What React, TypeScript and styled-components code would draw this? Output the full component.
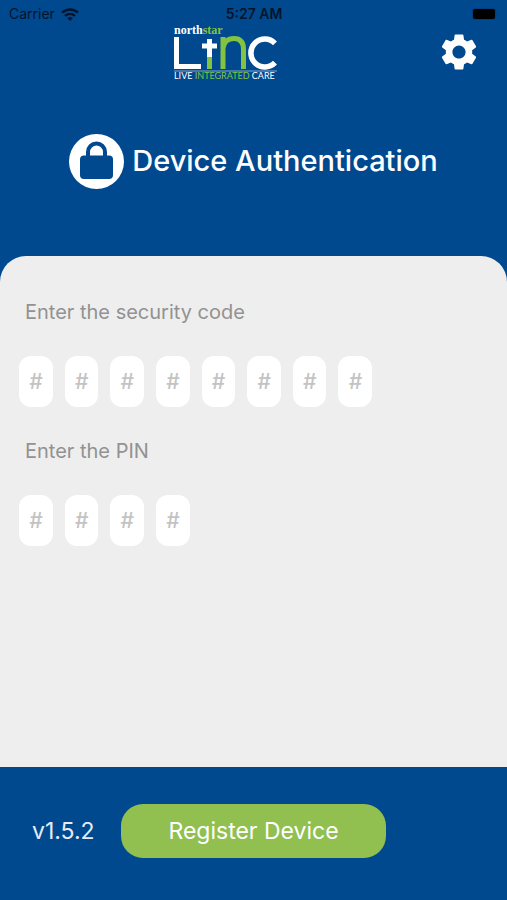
import React, { useState } from "react";
import styled, { createGlobalStyle } from "styled-components";
import { MdSettings } from "react-icons/md";

const colors = {
  blue: "#00498f",
  green: "#91c050",
  logoGreen: "#82c341",
  panel: "#eeeeee",
  ink: "#03152b",
};

const GlobalStyle = createGlobalStyle`
  *, *::before, *::after { box-sizing: border-box; }
  html, body { margin: 0; background: ${colors.blue}; }
  body { font-family: Inter, "Liberation Sans", sans-serif; }
`;

const Screen = styled.main`
  display: flex;
  flex-direction: column;
  min-height: 100vh;
  background: ${colors.blue};
`;

const StatusBar = styled.div`
  display: grid;
  grid-template-columns: 1fr auto 1fr;
  align-items: center;
  height: 24px;
  padding: 4px 8px 0 9px;
  font-size: 14px;
  line-height: 20px;
  color: ${colors.ink};
`;

const Carrier = styled.span`
  display: flex;
  align-items: center;
  gap: 6px;
`;

const Clock = styled.time`
  font-weight: 600;
`;

const BatteryIcon = styled.svg`
  justify-self: end;
`;

const Header = styled.header`
  display: grid;
  grid-template-columns: 1fr auto 1fr;
  align-items: center;
  height: 56px;
  padding: 0 26px;
`;

const Logo = styled.svg`
  grid-column: 2;
  margin-right: 56px;
`;

const SettingsButton = styled.button`
  display: flex;
  justify-self: end;
  padding: 0;
  border: 0;
  background: none;
  color: #ffffff;
  cursor: pointer;
`;

const TitleRow = styled.div`
  display: flex;
  align-items: center;
  justify-content: center;
  gap: 8px;
  height: 176px;
  padding-bottom: 14px;
`;

const Title = styled.h1`
  margin: 0;
  font-size: 29px;
  line-height: 36px;
  font-weight: 500;
  color: #ffffff;
`;

const Panel = styled.form`
  display: flex;
  flex: 1;
  flex-direction: column;
  gap: 32px;
  padding: 44px 19px;
  border-radius: 26px 26px 0 0;
  background: ${colors.panel};
`;

const CodeGroup = styled.div`
  display: flex;
  flex-direction: column;
  gap: 32px;
`;

const CodeLabel = styled.label`
  padding-left: 6px;
  font-size: 20px;
  line-height: 24px;
  color: #929292;
`;

const Digits = styled.div`
  display: grid;
  grid-template-columns: repeat(8, 1fr);
  gap: 12px;
  max-width: 353px;
`;

const Digit = styled.input`
  width: 100%;
  height: 51px;
  padding: 0;
  border: 0;
  border-radius: 12px;
  background: #ffffff;
  font: inherit;
  font-size: 21px;
  text-align: center;
  color: #555555;

  &::placeholder {
    font-style: italic;
    font-weight: 500;
    color: #c3c3c3;
    opacity: 1;
  }
`;

const Footer = styled.footer`
  display: flex;
  align-items: center;
  gap: 26px;
  height: 133px;
  padding: 0 32px 6px;
`;

const Version = styled.span`
  font-size: 23px;
  line-height: 28px;
  color: #e4edf7;
`;

const RegisterButton = styled.button`
  width: 60%;
  height: 54px;
  padding: 0;
  border: 0;
  border-radius: 22px;
  background: ${colors.green};
  font: inherit;
  font-size: 23px;
  line-height: 28px;
  color: #ffffff;
  cursor: pointer;
`;

function LincLogo() {
  return (
    <Logo width="104" height="56" viewBox="0 -2 104 56" role="img" aria-label="northstar LINC">
      <text x="0" y="8" fontFamily="'Liberation Serif', serif" fontSize="12" fontWeight="700" fill="#ffffff">
        north<tspan fill={colors.logoGreen}>star</tspan>
      </text>
      <path d="M2.5 11V40.500H27" fill="none" stroke="#ffffff" strokeWidth="5" />
      <path d="M33 31 38 26V43H33Z" fill={colors.logoGreen} />
      <path d="M35.500 13V31M28 20H43" fill="none" stroke="#ffffff" strokeWidth="5" />
      <path
        d="M49 43V11M49 22C50 16 54 12.500 60 12.500C66.500 12.500 69.500 16.500 69.500 23.500V43"
        fill="none"
        stroke={colors.logoGreen}
        strokeWidth="5"
      />
      <path d="M101 17.300A14 14 0 1 0 101 36.700" fill="none" stroke="#ffffff" strokeWidth="5.500" />
      <path d="M0 45H103" stroke="#7da7cc" strokeWidth="1" />
      <text x="0" y="53" fontFamily="Lato, sans-serif" fontSize="9" fill="#ffffff">
        LIVE <tspan fill={colors.logoGreen}>INTEGRATED</tspan> CARE
      </text>
    </Logo>
  );
}

function LockBadge() {
  return (
    <svg width="55" height="55" viewBox="0 0 55 55" aria-hidden="true">
      <circle cx="27.500" cy="27.500" r="27.500" fill="#ffffff" />
      <path d="M19 24V18a8.500 8.500 0 0 1 17 0V24" fill="none" stroke={colors.blue} strokeWidth="4" />
      <rect x="11" y="21.500" width="33" height="23.500" rx="4" fill={colors.blue} />
    </svg>
  );
}

function WifiIcon() {
  return (
    <svg width="18" height="13" viewBox="0 0 18 13" aria-hidden="true">
      <path d="M1 4.600C5.700.3 12.300.3 17 4.600M4 7.900C7 5.300 11 5.300 14 7.900" fill="none" stroke={colors.ink} strokeWidth="2.500" />
      <path d="M6.200 10.200Q9 8 11.800 10.200L9 13Z" fill={colors.ink} />
    </svg>
  );
}

interface CodeFieldProps {
  id: string;
  label: string;
  length: number;
}

function CodeField({ id, label, length }: CodeFieldProps) {
  const [values, setValues] = useState<string[]>(() => Array(length).fill(""));
  const update = (index: number, value: string) =>
    setValues((current) => current.map((v, i) => (i === index ? value : v)));

  return (
    <CodeGroup role="group" aria-labelledby={`${id}-label`}>
      <CodeLabel id={`${id}-label`} htmlFor={`${id}-0`}>
        {label}
      </CodeLabel>
      <Digits>
        {values.map((value, i) => (
          <Digit
            key={i}
            id={`${id}-${i}`}
            aria-label={`${label}, character ${i + 1}`}
            placeholder="#"
            maxLength={1}
            value={value}
            onChange={(e) => update(i, e.target.value)}
          />
        ))}
      </Digits>
    </CodeGroup>
  );
}

export default function App() {
  return (
    <>
      <GlobalStyle />
      <Screen>
        <StatusBar>
          <Carrier>
            Carrier
            <WifiIcon />
          </Carrier>
          <Clock>5:27 AM</Clock>
          <BatteryIcon width="28" height="14" viewBox="0 0 28 14" aria-hidden="true">
            <rect x="1" y="1" width="24" height="12" rx="3" fill="#003f7c" />
            <rect x="2" y="2" width="22" height="10" rx="2" fill="#000000" />
            <path d="M26 5v4q2-2 0-4" fill="#003f7c" />
          </BatteryIcon>
        </StatusBar>
        <Header>
          <LincLogo />
          <SettingsButton type="button" aria-label="Settings">
            <MdSettings size={44} />
          </SettingsButton>
        </Header>
        <TitleRow>
          <LockBadge />
          <Title>Device Authentication</Title>
        </TitleRow>
        <Panel id="register" onSubmit={(e) => e.preventDefault()}>
          <CodeField id="security" label="Enter the security code" length={8} />
          <CodeField id="pin" label="Enter the PIN" length={4} />
        </Panel>
        <Footer>
          <Version>v1.5.2</Version>
          <RegisterButton type="submit" form="register">
            Register Device
          </RegisterButton>
        </Footer>
      </Screen>
    </>
  );
}
